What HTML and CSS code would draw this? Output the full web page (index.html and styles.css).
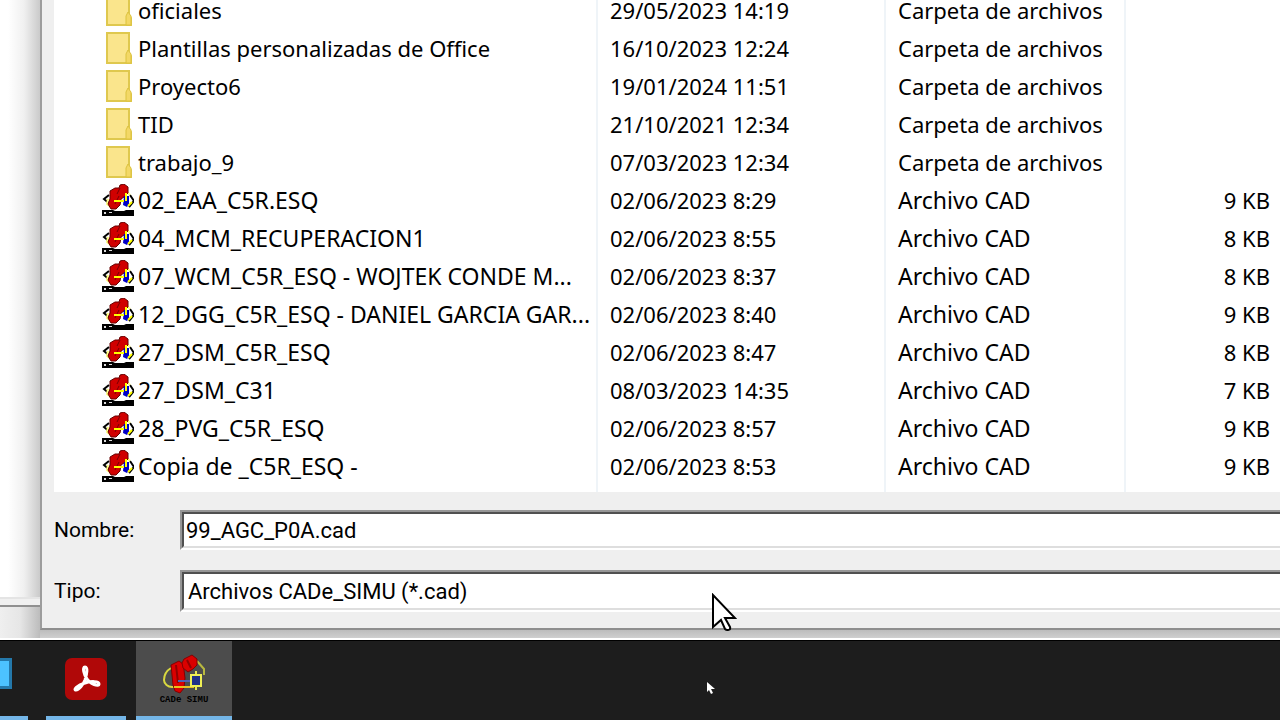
FILE: index.html
```html
<!DOCTYPE html>
<html lang="es">
<head>
    <meta charset="UTF-8">
    <meta name="viewport" content="width=device-width, initial-scale=1.0">
    <title>Guardar como</title>
    <link rel="stylesheet" href="styles.css">
</head>
<body>
    <!-- Shared icons -->
    <svg class="icon-defs" aria-hidden="true">
        <symbol id="folder" viewBox="0 0 26 32">
            <path d="M1 1h22v20l2 3v7H1z" fill="#fae58c" stroke="#dfc84e" stroke-width="2"/>
            <path d="M20 31v-9l2-4 3 4v9z" fill="#f3d866" stroke="#dcc23e" stroke-width="1"/>
        </symbol>
        <symbol id="cade" viewBox="0 0 32 32">
            <path d="M7 11l-5 4 7 6M28 11l4 6-5 6" fill="none" stroke="#000" stroke-width="2"/>
            <path d="M6 15l-1 5 5 4M25 8l3 3" fill="none" stroke="#ffff80" stroke-width="2"/>
            <path d="M8 7l5-3h4l1-3 4-1 4 3v6l-4 4-3 2-1 6-4 4h-5l-3-5 2-5z" fill="#d00000" stroke="#600" stroke-width="1"/>
            <path d="M18 4l-3 6M13 20l4-8" fill="none" stroke="#700" stroke-width="1"/>
            <path d="M22 12h5v8l-2 3-4-2z" fill="#0000c8"/>
            <path d="M12 17h10M24 9v8M26 22l4-4" fill="none" stroke="#ff0" stroke-width="2"/>
            <path d="M0 26h11l2 1h9l2-1h8v6H0z" fill="#000"/>
            <path d="M2 28h2v2H2zM7 28h3v1H7z" fill="#ddd"/>
        </symbol>
    </svg>

    <main class="desktop">
        <div class="back-window">
            <div class="back-content"></div>
            <div class="back-status"></div>
        </div>

        <section class="dialog">
            <div class="file-list">
                <table>
                    <colgroup>
                        <col>
                        <col class="col-date">
                        <col class="col-type">
                        <col class="col-size">
                    </colgroup>
                    <tbody class="folders">
                        <tr><td><svg class="folder"><use href="#folder"/></svg>oficiales</td><td>29/05/2023 14:19</td><td>Carpeta de archivos</td><td></td></tr>
                        <tr><td><svg class="folder"><use href="#folder"/></svg>Plantillas personalizadas de Office</td><td>16/10/2023 12:24</td><td>Carpeta de archivos</td><td></td></tr>
                        <tr><td><svg class="folder"><use href="#folder"/></svg>Proyecto6</td><td>19/01/2024 11:51</td><td>Carpeta de archivos</td><td></td></tr>
                        <tr><td><svg class="folder"><use href="#folder"/></svg>TID</td><td>21/10/2021 12:34</td><td>Carpeta de archivos</td><td></td></tr>
                        <tr><td><svg class="folder"><use href="#folder"/></svg>trabajo_9</td><td>07/03/2023 12:34</td><td>Carpeta de archivos</td><td></td></tr>
                    </tbody>
                    <tbody class="files">
                        <tr><td><svg class="cade"><use href="#cade"/></svg>02_EAA_C5R.ESQ</td><td>02/06/2023 8:29</td><td>Archivo CAD</td><td>9 KB</td></tr>
                        <tr><td><svg class="cade"><use href="#cade"/></svg>04_MCM_RECUPERACION1</td><td>02/06/2023 8:55</td><td>Archivo CAD</td><td>8 KB</td></tr>
                        <tr><td><svg class="cade"><use href="#cade"/></svg>07_WCM_C5R_ESQ - WOJTEK CONDE M...</td><td>02/06/2023 8:37</td><td>Archivo CAD</td><td>8 KB</td></tr>
                        <tr><td><svg class="cade"><use href="#cade"/></svg>12_DGG_C5R_ESQ - DANIEL GARCIA GAR...</td><td>02/06/2023 8:40</td><td>Archivo CAD</td><td>9 KB</td></tr>
                        <tr><td><svg class="cade"><use href="#cade"/></svg>27_DSM_C5R_ESQ</td><td>02/06/2023 8:47</td><td>Archivo CAD</td><td>8 KB</td></tr>
                        <tr><td><svg class="cade"><use href="#cade"/></svg>27_DSM_C31</td><td>08/03/2023 14:35</td><td>Archivo CAD</td><td>7 KB</td></tr>
                        <tr><td><svg class="cade"><use href="#cade"/></svg>28_PVG_C5R_ESQ</td><td>02/06/2023 8:57</td><td>Archivo CAD</td><td>9 KB</td></tr>
                        <tr><td><svg class="cade"><use href="#cade"/></svg>Copia de _C5R_ESQ -</td><td>02/06/2023 8:53</td><td>Archivo CAD</td><td>9 KB</td></tr>
                    </tbody>
                </table>
            </div>

            <form class="save-form">
                <label for="nombre">Nombre:</label>
                <div class="field"><input type="text" id="nombre" name="nombre" value="99_AGC_P0A.cad"></div>
                <label for="tipo">Tipo:</label>
                <div class="field">
                    <select id="tipo" name="tipo">
                        <option>Archivos CADe_SIMU (*.cad)</option>
                    </select>
                </div>
            </form>
        </section>
    </main>

    <footer class="taskbar">
        <button type="button" class="task task-cut" aria-label="Explorador">
            <svg width="12" height="32" viewBox="0 0 12 32">
                <path d="M0 0h12v31H0z" fill="#2478aa"/>
                <path d="M0 3h9v25H0z" fill="#4cc2ff"/>
            </svg>
        </button>
        <button type="button" class="task" aria-label="Adobe Acrobat">
            <svg width="44" height="44" viewBox="0 0 44 44">
                <rect x="1" y="1" width="42" height="42" rx="7" fill="#b00808"/>
                <path d="M21 10c3 0 2 7 0 13-2 5-6 10-9 10-3 0 1-5 9-7 6-2 14-2 14 1 0 3-9 0-12-5-3-4-5-12-2-12z" fill="none" stroke="#fff" stroke-width="3" stroke-linejoin="round"/>
            </svg>
        </button>
        <button type="button" class="task task-active" aria-label="CADe SIMU">
            <svg width="52" height="50" viewBox="0 0 52 50">
                <path d="M13 14c-5 3-7 7-7 12 0 4 4 7 8 7h22" fill="none" stroke="#d8d840" stroke-width="2"/>
                <path d="M39 7l7 8v6" fill="none" stroke="#b8b840" stroke-width="2"/>
                <path d="M13 11l8-4 4 3 1 6 1 8-1 10-4 5-5-2-2-6-1-10z" fill="#da0000" stroke="#850000" stroke-width="1"/>
                <path d="M26 5l8-4 5 4v6l-4 4-5 3-5-4-1-5z" fill="#da0000" stroke="#850000" stroke-width="1"/>
                <path d="M18 11l2 18M29 6l4 8" fill="none" stroke="#920000" stroke-width="2"/>
                <path d="M16 33h20" stroke="#e8c020" stroke-width="2"/>
                <path d="M20 27h12" stroke="#5060b0" stroke-width="2"/>
                <path d="M38 17v19" stroke="#e8e850" stroke-width="2"/>
                <rect x="33" y="21" width="10" height="11" fill="#203088" stroke="#eeee55" stroke-width="2"/>
                <text x="26" y="48" text-anchor="middle" class="cade-caption">CADe SIMU</text>
            </svg>
        </button>
    </footer>

    <!-- Mouse pointers -->
    <svg class="pointer" width="26" height="40" viewBox="0 0 26 40">
        <path d="M2 2v32l8-7 4 9c2 2 6 1 5-2l-5-9h10z" fill="#fff" stroke="#000" stroke-width="2"/>
    </svg>
    <svg class="pointer-small" width="8" height="13" viewBox="0 0 8 13">
        <path d="M0 0v10l2-2 2 4 2-1-2-4h4z" fill="#fff"/>
    </svg>
</body>
</html>
```
FILE: styles.css
```css
* {
    box-sizing: border-box;
}

body {
    margin: 0;
    height: 100vh;
    display: flex;
    flex-direction: column;
    overflow: hidden;
    font-family: "Noto Sans", "Open Sans", sans-serif;
    font-size: 22px;
    color: #000;
}

.icon-defs {
    display: none;
}

.desktop {
    flex: 1;
    min-height: 0;
    display: flex;
    padding-bottom: 10px;
    background: linear-gradient(to top, #fff 2px, #cfcfcf 2px, #b8b8b8 12px);
}

/* Window behind the dialog */
.back-window {
    width: 40px;
    margin-bottom: -8px;
    display: flex;
    flex-direction: column;
}

.back-content {
    flex: 1;
    background: linear-gradient(to right, #fff 8px, #f0f0f0 24px, #cacaca);
    border-bottom: 2px solid #e4e4e4;
}

.back-status {
    height: 39px;
    background: linear-gradient(to right, #efefef, #e6e6e6 20px, #bcbcbc);
    background-clip: padding-box;
    border-top: 6px solid #f0f0f0;
    box-shadow: inset 0 2px #909090;
}

/* Save dialog */
.dialog {
    flex: 1;
    min-width: 0;
    display: flex;
    flex-direction: column;
    background: #efefef;
    border-left: 2px solid #9c9c9c;
    border-bottom: 2px solid #8e8e8e;
    padding-left: 12px;
}

.file-list {
    flex: 1;
    min-height: 0;
    display: flex;
    flex-direction: column;
    justify-content: flex-end;
    overflow: hidden;
    background: #fff;
}

table {
    width: 100%;
    table-layout: fixed;
    border-collapse: separate;
    border-spacing: 0;
}

.col-date {
    width: 288px;
}

.col-type {
    width: 240px;
}

.col-size {
    width: 154px;
}

td {
    height: 38px;
    padding: 0 0 0 12px;
    line-height: 38px;
    white-space: nowrap;
    border-right: 2px solid #eff4f8;
}

.files tr:last-child td {
    height: 45px;
    padding-bottom: 7px;
}

.files td:nth-child(odd) {
    font-size: 23px;
}

td:first-child {
    padding-left: 48px;
}

td:last-child {
    padding-right: 10px;
    text-align: right;
    border-right: none;
}

td svg {
    vertical-align: middle;
    height: 32px;
}

.folder {
    width: 26px;
    margin: -6px 6px 0 4px;
}

.cade {
    width: 32px;
    margin: -6px 4px 0 0;
}

/* Name and type fields */
.save-form {
    display: grid;
    grid-template-columns: 126px 1fr;
    row-gap: 20px;
    align-items: center;
    padding: 18px 0 16px;
    font-family: Roboto, sans-serif;
    font-size: 22px;
}

.save-form label {
    font-size: 21px;
}

.field {
    border: 2px solid #969696;
    border-right: none;
    border-bottom-color: #fff;
}

.field input,
.field select {
    display: block;
    width: 100%;
    height: 36px;
    margin: 0;
    padding: 0 2px;
    border: 2px solid #505050;
    border-right: none;
    border-bottom-color: #dedede;
    border-radius: 0;
    background: #fff;
    color: #000;
    font: inherit;
    outline: none;
    appearance: none;
}

.field select {
    height: 38px;
    padding: 0 4px;
}

/* Taskbar */
.taskbar {
    height: 80px;
    display: flex;
    background: #1d1d1d;
    border-top: 1px solid #000;
}

.task {
    width: 80px;
    margin: 0 10px 0 0;
    padding: 0;
    display: flex;
    align-items: center;
    justify-content: center;
    background: none;
    border: none;
    border-bottom: 4px solid #74b6e8;
}

.task-cut {
    width: 28px;
    margin-right: 18px;
    justify-content: flex-start;
    padding-bottom: 10px;
}

.task-active {
    width: 96px;
    background: #4c4c4c;
}

.cade-caption {
    font-family: "Liberation Mono", monospace;
    font-size: 9px;
    font-weight: bold;
}

.pointer {
    position: absolute;
    left: 711px;
    top: 593px;
}

.pointer-small {
    position: absolute;
    left: 707px;
    top: 682px;
}
```
